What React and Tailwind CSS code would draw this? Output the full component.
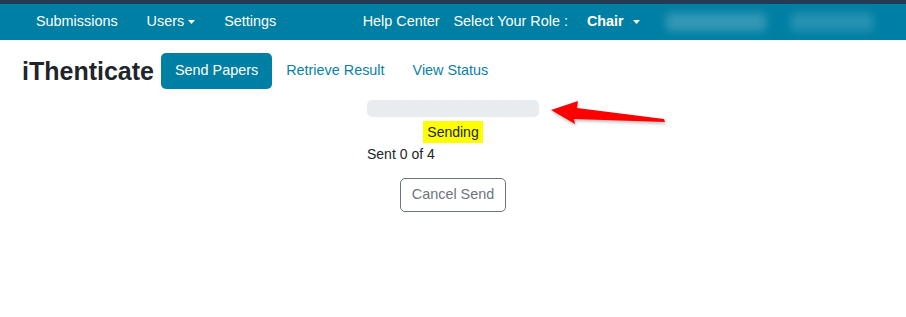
import { useState } from "react";

const NAV_LINKS = ["Submissions", "Users", "Settings"];
const TABS = ["Retrieve Result", "View Status"];

function Caret({ className = "" }) {
  return (
    <svg width="7" height="4" viewBox="0 0 7 4" className={className}>
      <path d="M0 0h7L3.5 4z" fill="currentColor" />
    </svg>
  );
}

function TopNav() {
  return (
    <div className="bg-[#243b53] pt-[4px]">
      <nav className="flex h-[36px] items-center bg-[#007fa4] pl-[21.5px] text-[14.4px] text-white">
        {NAV_LINKS.map((label) => (
          <a key={label} className="flex items-center px-[14.5px]">
            {label}
            {label === "Users" ? <Caret className="ml-[4px] mt-[1px]" /> : null}
          </a>
        ))}
        <a className="ml-[72px]">Help Center</a>
        <span className="ml-[14px]">Select Your Role :</span>
        <span className="ml-[19px] flex items-center font-bold">
          Chair
          <Caret className="ml-[9px]" />
        </span>
        {/* account info, blurred out */}
        <div className="ml-[26px] h-[18px] w-[100px] rounded bg-white/20 blur-[4px]" />
        <div className="ml-[25px] h-[18px] w-[82px] rounded bg-white/15 blur-[4px]" />
      </nav>
    </div>
  );
}

function SubNav() {
  const [active] = useState("Send Papers");
  return (
    <div className="flex h-[60px] items-center pl-[22px] pt-[2px] text-[14.4px]">
      <h1 className="mr-[7px] text-[25px] font-bold leading-none text-[#212529]">iThenticate</h1>
      <button className="h-[36px] rounded-[5px] bg-[#007fa4] px-[14px] text-white">{active}</button>
      {TABS.map((label) => (
        <a key={label} className="px-[14px] text-[#0a7fa6]">
          {label}
        </a>
      ))}
    </div>
  );
}

function SendProgress({ sent, total }) {
  return (
    <div className="relative mx-auto w-[172px] text-[14px] text-[#212529]">
      <div className="h-[17px] w-full rounded-[5px] bg-[#e9ecef]" />
      <div className="mt-[4px] text-center leading-[22px]">
        <span className="inline-block bg-[#ffff00] px-[4px]">Sending</span>
      </div>
      <div className="mt-[1px] leading-[20px]">
        Sent {sent} of {total}
      </div>
      <div className="mt-[14px] text-center">
        <button className="h-[34px] rounded-[5px] border border-[#6c757d] px-[11px] text-[14.4px] text-[#6c757d]">
          Cancel Send
        </button>
      </div>
    </div>
  );
}

export default function App() {
  return (
    <div className="relative min-h-screen bg-white font-['Liberation_Sans',Arial,sans-serif]">
      <TopNav />
      <SubNav />
      <SendProgress sent={0} total={4} />
      {/* annotation arrow */}
      <svg
        className="absolute left-[545px] top-[95px]"
        width="125"
        height="35"
        viewBox="545 95 125 35"
        style={{ filter: "drop-shadow(1px 2px 1.5px rgba(0,0,0,0.25))" }}
      >
        <polygon
          points="551,110 578,101 577,108 664,119 665,122 574,119 575,124"
          fill="#ff0000"
        />
      </svg>
    </div>
  );
}
